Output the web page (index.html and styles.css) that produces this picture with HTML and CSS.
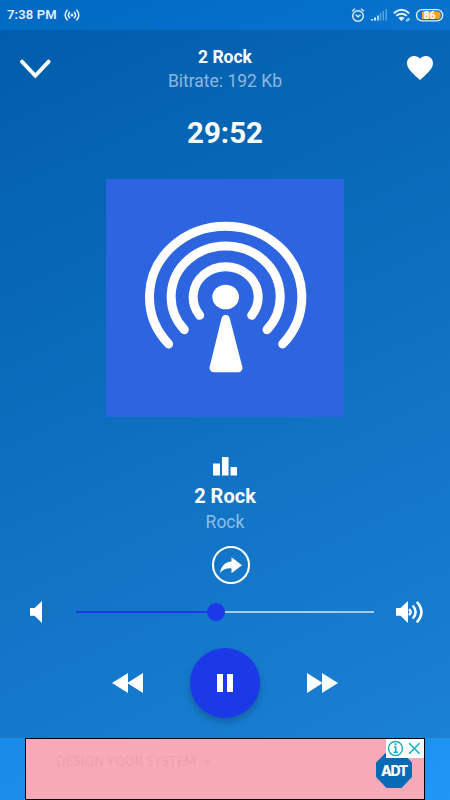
FILE: index.html
```html
<!DOCTYPE html>
<html lang="en">
<head>
<meta charset="utf-8">
<title>2 Rock</title>
<link rel="stylesheet" href="styles.css">
</head>
<body>
<div class="phone">
  <div class="status">
    <span class="clock">7:38 PM</span>
    <svg class="cast" width="16" height="12" viewBox="0 0 16 12" fill="none" stroke="currentColor" stroke-width="1.5" stroke-linecap="round"><circle cx="8" cy="6" r="1.5" fill="currentColor" stroke="none"/><path d="M5.6 3.2Q3.2 6 5.6 8.8M3.2 1.2Q-.8 6 3.2 10.8M10.4 3.2Q12.8 6 10.4 8.8M12.8 1.2Q16.8 6 12.8 10.8"/></svg>
    <svg class="tray" width="94" height="16" viewBox="350 7 94 16" fill="none" stroke="currentColor">
      <circle cx="358" cy="16" r="5.3" stroke-width="1.4"/><path d="M352 11.2l3-2.4M364 11.2l-3-2.4M355.7 14.8l2.3 2 2.6-2" stroke-width="1.3"/>
      <path d="M372 19v1.5M375 17.5v3" stroke-width="2"/><path d="M378 15.5v5" stroke-width="1.5"/><path d="M380.5 13v7.5M383.3 11v9.5M386.2 9v11.5" stroke-width="1.4" opacity=".4"/>
      <path d="M393.8 13.2Q401.5 6.5 409.2 13.2M396.3 15.8Q401.5 11.5 406.7 15.8" stroke-width="1.9"/><path d="M398.4 18Q401.5 15.5 404.6 18L401.5 21Z" fill="currentColor" stroke="none"/><path d="M406 20.5l1.5-1.7h2M409.5 19l-1.5 1.9h-2" stroke-width="1"/>
      <rect x="416.5" y="9.6" width="26.2" height="11.3" rx="5.6" stroke-width="1.3"/><path d="M422 11.6h15a3.6 3.6 0 0 1 0 7.3h-15z" fill="#ffa51b" stroke="none"/>
      <text class="charge" x="429.5" y="18.9" text-anchor="middle">86</text>
    </svg>
  </div>

  <main class="player">
    <header class="head">
      <svg width="32" height="20" viewBox="0 0 32 20" fill="none" stroke="currentColor" stroke-width="3.8" stroke-linecap="round"><path d="M2 2.6L15.300 16.800 28.600 2.600"/></svg>
      <div class="heading">
        <h1>2 Rock</h1>
        <p>Bitrate: 192 Kb</p>
      </div>
      <svg class="heart" width="26" height="24" viewBox="2 3 20 18.350" preserveAspectRatio="none" fill="currentColor"><path d="m12 21.350-1.450-1.320C5.400 15.360 2 12.280 2 8.500 2 5.420 4.420 3 7.500 3c1.740 0 3.410.81 4.500 2.090C13.090 3.810 14.760 3 16.500 3 19.580 3 22 5.420 22 8.500c0 3.780-3.400 6.860-8.550 11.540z"/></svg>
    </header>

    <div class="timer">29:52</div>

    <svg class="art" viewBox="18 28 714 714" fill="none" stroke="#fff" stroke-width="27" stroke-linecap="round">
      <path d="M206 523A228.500 212.500 0 1 1 548 523M253 480A163.500 152 0 1 1 501 480M299 437A97.500 91 0 1 1 455 437"/>
      <ellipse cx="377" cy="382" rx="40" ry="37" fill="#fff" stroke="none"/>
      <path d="M377 448L341 595H415Z" fill="#fff" stroke-width="25" stroke-linejoin="round"/>
    </svg>

    <svg class="bars" width="25" height="19" viewBox="0 0 25 19" fill="currentColor"><path d="M0 6.500h7V18.500H0zM9 0h6.500v18.500H9zM17.500 10H24v8.500h-6.500z"/></svg>
    <h2>2 Rock</h2>
    <p class="genre">Rock</p>

    <svg class="share" width="40" height="40" viewBox="0 0 40 40" fill="none"><circle cx="20" cy="20" r="18" stroke="currentColor" stroke-width="2.100"/><path d="M9 28C10.500 20 15 16.800 20.500 16.500V12.200L31 20.200 20.500 28.200V23.400C16 23 12.500 24 9 28Z" fill="currentColor"/></svg>

    <div class="volume">
      <svg width="13" height="24" viewBox="0 0 13 24" fill="currentColor"><path d="M0 8h4.500L12 1v22l-7.500-7.200H0z"/></svg>
      <div class="track"><div class="level"></div><div class="knob"></div><div class="rest"></div></div>
      <svg width="28" height="24" viewBox="0 0 28 24" fill="none" stroke="currentColor" stroke-width="2.500"><path d="M0 8h4.500L12 1v22l-7.500-7.200H0z" fill="currentColor" stroke="none"/><path d="M13 9.200Q16.500 12 13 15.200M16.700 5.500Q22.500 12 16.700 18.600M20.800 1.800Q30 12 20.800 22.300"/></svg>
    </div>

    <div class="controls">
      <svg width="32" height="20" viewBox="0 0 32 20" fill="currentColor"><path d="M0 10L16 0V9.500L31 0V20L16 10.500V20Z"/></svg>
      <div class="pause"><i></i><i></i></div>
      <svg width="32" height="20" viewBox="0 0 32 20" fill="currentColor"><path d="M32 10L16 0V9.500L1 0V20L16 10.500V20Z"/></svg>
    </div>
  </main>

  <footer class="banner">
    <span class="slogan">DESIGN YOUR SYSTEM &nbsp;&gt;</span>
    <svg class="brand" width="36" height="36" viewBox="0 0 36 36"><path d="M10.500 0h15L36 10.500v14.500L25.500 36h-15L0 25V10.500z" fill="#086ab5"/><text class="brand-name" x="18" y="23.500" text-anchor="middle">ADT</text></svg>
    <div class="choices">
      <svg width="38" height="19" viewBox="0 0 38 19" fill="none" stroke="#12adca" stroke-width="1.400"><circle cx="9.500" cy="9.500" r="7"/><path d="M7.800 8h2v5M7.500 13.300h4.500" stroke-width="1.500"/><circle cx="9.500" cy="5.200" r="1.100" fill="#12adca" stroke="none"/><path d="M23.200 4.300l10.400 10.400M33.600 4.300L23.200 14.700" stroke-width="1.600"/></svg>
    </div>
  </footer>
</div>
</body>
</html>
```

FILE: styles.css
```css
* { box-sizing: border-box; }
body { margin: 0; font-family: Roboto, "Liberation Sans", sans-serif; color: #fff; }
h1, h2, p { margin: 0; }
svg { display: block; flex: none; }

.phone {
  width: 450px;
  height: 800px;
  display: flex;
  flex-direction: column;
  background: linear-gradient(155deg, #0069c2 0%, #2196f5 100%);
}

.status { height: 30px; padding: 0 6px 0 7px; display: flex; align-items: center; color: #e3effa; }
.clock { font-size: 13px; font-weight: 600; line-height: 30px; letter-spacing: .15px; }
.cast { margin-left: 7px; }
.tray { margin-left: auto; }
.charge { font-size: 10.5px; font-weight: 800; fill: #fff; stroke: none; }

.player {
  height: 708px;
  display: flex;
  flex-direction: column;
  align-items: center;
  background: rgba(0, 0, 0, .12);
}

.head {
  width: 100%;
  height: 78px;
  padding: 15px 17px 0 20px;
  display: grid;
  grid-template-columns: 32px 1fr 26px;
}
.head > svg { margin-top: 14px; }
.head > .heart { margin-top: 11px; }
.heading { text-align: center; margin: 1px 9px 0 0; }
.heading h1 { font-size: 17.5px; line-height: 23px; font-weight: 700; }
.heading p { font-size: 17.5px; line-height: 24px; color: #8db8df; }
.timer { height: 71px; padding-top: 7px; font-size: 29.5px; line-height: 36px; font-weight: 700; }
.art { width: 238px; height: 238px; background: #2d64e0; }
.bars { margin-top: 40px; }
h2 { margin-top: 8px; font-size: 20px; line-height: 24px; font-weight: 700; }
.genre { font-size: 17.5px; line-height: 28px; color: #8fc0e9; }
.share { margin: 9px 0 0 12px; }

.volume { width: 100%; height: 24px; margin-top: 15px; padding: 0 26px 0 30px; display: flex; align-items: center; }
.track { flex: 1; margin: 0 22px 0 33px; display: flex; align-items: center; }
.level { width: 131px; height: 2px; background: #1d38e8; }
.knob { width: 18px; height: 18px; border-radius: 50%; background: #1d38e8; }
.rest { flex: 1; height: 2px; background: #a3cbee; }

.controls { display: flex; align-items: center; gap: 46px; margin-top: 24px; }
.pause {
  width: 70px;
  height: 70px;
  border-radius: 50%;
  background: #1c39e8;
  box-shadow: 0 4px 7px rgba(0, 0, 0, .22);
  display: flex;
  align-items: center;
  justify-content: center;
  gap: 4px;
}
.pause i { width: 6px; height: 18px; background: #fff; }

.banner {
  position: relative;
  width: 400px;
  height: 62px;
  margin-left: 25px;
  padding: 14px 12px 0 30px;
  display: flex;
  justify-content: space-between;
  border: 1px solid #000;
  background: #f6aab8;
}
.slogan { font: 12.5px/18px Lato, sans-serif; letter-spacing: .4px; color: #ee9fae; }
.brand { margin-top: -1px; }
.brand-name { font: 800 14px Inter, sans-serif; letter-spacing: -1.3px; fill: #fff; }
.choices { position: absolute; top: 0; right: 0; width: 38px; height: 19px; background: #fff; }
```
